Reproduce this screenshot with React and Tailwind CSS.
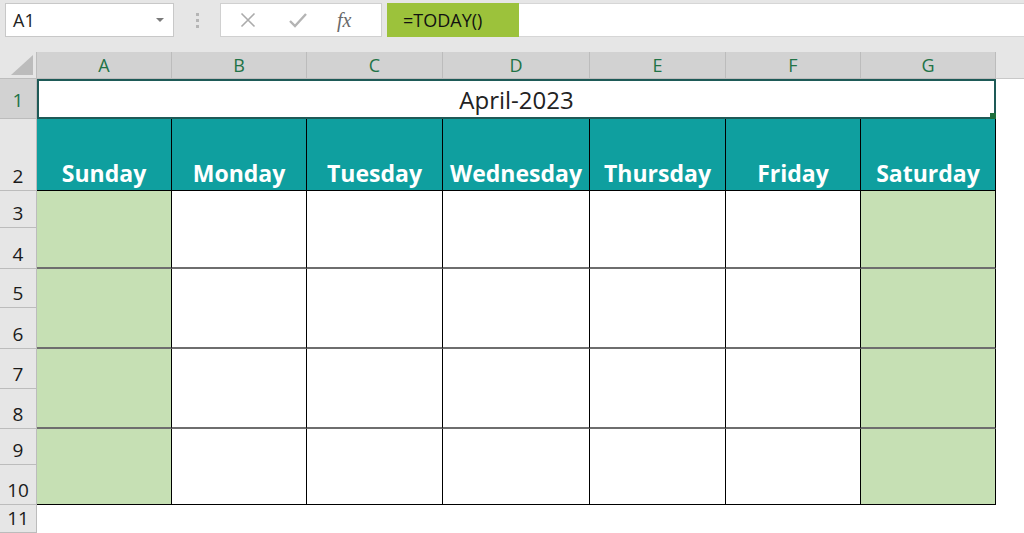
import React from 'react';

const days = ['Sunday', 'Monday', 'Tuesday', 'Wednesday', 'Thursday', 'Friday', 'Saturday'];
const cols = ['A', 'B', 'C', 'D', 'E', 'F', 'G'];

const rowNums = [1, 2, 3, 4, 5, 6, 7, 8, 9, 10, 11];

const App = () => {
  return (
    <div
      className="w-[1024px] h-[533px] overflow-hidden bg-white text-[#222]"
      style={{ fontFamily: '"Open Sans", "Noto Sans", sans-serif' }}
    >
      {/* formula bar */}
      <div className="h-[52px] bg-[#e6e6e6] pt-[3px]">
        <div className="flex h-[34px] items-stretch">
          <div className="ml-[5px] flex w-[169px] items-center justify-between border border-[#c8c8c8] bg-white pl-[7px] pr-[9px]">
            <span className="text-[18px]">A1</span>
            <svg width="8" height="5" viewBox="0 0 8 5">
              <path d="M0 0 L8 0 L4 4 Z" fill="#7a7a7a" />
            </svg>
          </div>
          <div className="flex w-[46px] flex-col items-center justify-center gap-[3px]">
            <span className="h-[3px] w-[3px] bg-[#b5b5b5]" />
            <span className="h-[3px] w-[3px] bg-[#b5b5b5]" />
            <span className="h-[3px] w-[3px] bg-[#b5b5b5]" />
          </div>
          <div className="flex w-[162px] items-center border border-[#d0d0d0] bg-white">
            <svg className="ml-[19px]" width="16" height="16" viewBox="0 0 16 16">
              <path d="M1.5 1.5 L14.5 14.5 M14.5 1.5 L1.5 14.5" stroke="#ababab" strokeWidth="1.6" />
            </svg>
            <svg className="ml-[33px]" width="18" height="16" viewBox="0 0 18 16">
              <path d="M1 9 L6 14 L17 2" stroke="#b4b4b4" strokeWidth="2.4" fill="none" />
            </svg>
            <span
              className="ml-[30px] text-[20px] italic text-[#6a6a6a]"
              style={{ fontFamily: '"Liberation Serif", serif' }}
            >
              fx
            </span>
          </div>
          <div className="ml-[5px] flex w-[132px] items-center bg-[#9cc23b] pl-[16px] text-[18px] text-[#111]">
            =TODAY()
          </div>
          <div className="flex-1 border-y border-[#d6d6d6] bg-white" />
        </div>
      </div>

      {/* sheet */}
      <div className="grid grid-cols-[37px_135px_135px_136px_147px_136px_135px_135px_1fr] grid-rows-[27px_40px_72px_37px_41px_39px_41px_40px_40px_36px_40px_28px]">
        {/* corner */}
        <div className="relative border-r border-b border-[#bdbdbd] bg-[#e6e6e6]">
          <svg className="absolute right-[3px] bottom-[3px]" width="22" height="20" viewBox="0 0 22 20">
            <path d="M22 0 L22 20 L0 20 Z" fill="#bcbcbc" />
          </svg>
        </div>
        {cols.map((c) => (
          <div
            key={c}
            className="flex items-end justify-center border-r border-b border-[#bcbcbc] bg-[#d2d2d2] pb-[1px] text-[18px] leading-[24px] text-[#217346]"
          >
            {c}
          </div>
        ))}
        <div className="border-b border-[#c8c8c8] bg-[#e6e6e6]" />

        {/* row headers */}
        {rowNums.map((n, i) => (
          <div
            key={n}
            className={`col-start-1 flex items-end justify-center border-r border-b text-[19px] leading-[24px] ${
              n === 1 ? 'border-[#bcbcbc] bg-[#d2d2d2] pb-[6px] text-[#217346]' : 'border-[#bcbcbc] bg-[#e6e6e6] pb-[2px] text-[#1a1a1a]'
            }`}
            style={{ gridRowStart: i + 2 }}
          >
            {n}
          </div>
        ))}

        {/* row 1: merged title */}
        <div className="relative col-start-2 col-end-9 row-start-2 flex items-center justify-center border-2 border-[#1e5a57] bg-white pt-[2px] text-[24px]">
          April-2023
          <span className="absolute -right-[2px] -bottom-[2px] h-[6px] w-[6px] bg-[#1e6e3c]" />
        </div>
        <div className="col-start-9 row-start-2" />

        {/* row 2: day names */}
        {days.map((d, i) => (
          <div
            key={d}
            className="row-start-3 flex items-end justify-center border-r border-b border-black bg-[#0f9f9f] pb-[1px] text-[23px] font-bold leading-[32px] text-white"
            style={{ gridColumnStart: i + 2 }}
          >
            {d}
          </div>
        ))}
        <div className="col-start-9 row-start-3" />

        {/* weeks */}
        {[0, 1, 2, 3].map((w) =>
          days.map((d, i) => (
            <div
              key={d + w}
              className={`border-r border-black ${
                w === 3 ? 'border-b' : 'border-b-2 border-b-[#6e6e6e]'
              } ${i === 0 || i === 6 ? 'bg-[#c6e0b4]' : 'bg-white'}`}
              style={{ gridColumnStart: i + 2, gridRow: `${4 + w * 2} / span 2` }}
            />
          ))
        )}
      </div>
    </div>
  );
};

export default App;
